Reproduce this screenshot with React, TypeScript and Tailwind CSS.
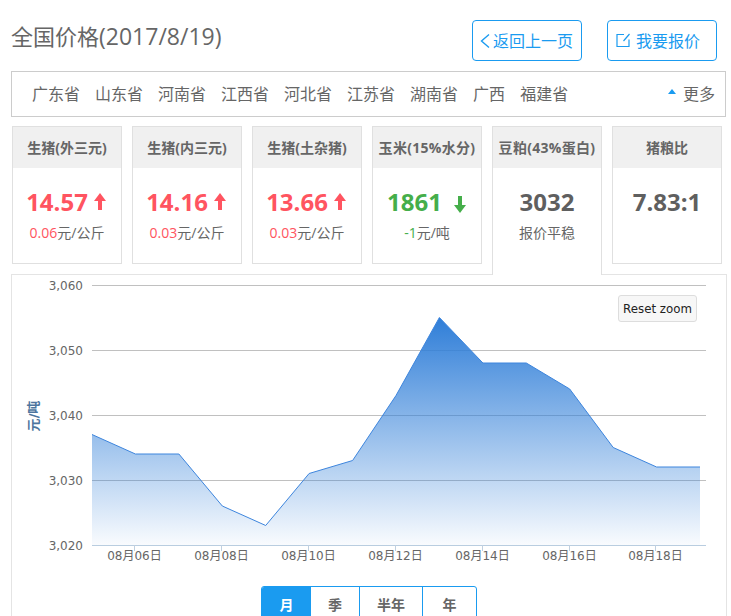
import React from "react";

const data = [3037, 3034, 3034, 3026, 3023, 3031, 3033, 3043, 3055, 3048, 3048, 3044, 3035, 3032, 3032];
const px = (i: number) => 81 + i * 43.43;
const py = (v: number) => 271 - (v - 3020) * 6.5;
const line = data.map((v, i) => `${px(i).toFixed(1)},${py(v).toFixed(1)}`).join(" ");
const area = `${px(0)},271 ${line} ${px(14)},271`;

const provinces = [
  ["广东省", 20],
  ["山东省", 15],
  ["河南省", 15],
  ["江西省", 15],
  ["河北省", 15],
  ["江苏省", 15],
  ["湖南省", 15],
  ["广西", 15],
  ["福建省", 15],
] as const;

function Arrow({ up, color }: { up: boolean; color: string }) {
  return (
    <svg width="14" height="18" viewBox="0 0 14 18" className="shrink-0">
      {up ? (
        <path d="M7 0 L13 8 L9 8 L9 17 L5 17 L5 8 L1 8 Z" fill={color} />
      ) : (
        <path d="M7 18 L13 10 L9 10 L9 1 L5 1 L5 10 L1 10 Z" fill={color} />
      )}
    </svg>
  );
}

function Card({
  title,
  value,
  sub,
  unit,
  tone,
  active,
  wide,
}: {
  title: string;
  value: string;
  sub?: string;
  unit?: string;
  tone: "up" | "down" | "flat";
  active?: boolean;
  wide?: boolean;
}) {
  const valueClass = tone === "up" ? "text-[#ff5460]" : tone === "down" ? "text-[#45ae4a]" : "text-[#5f5f5f]";
  return (
    <div
      className={
        active
          ? "relative z-10 -mb-px flex h-[149px] w-[110px] flex-col border border-b-0 border-[#e0e0e0] bg-white"
          : "flex h-[138px] w-[110px] flex-col border border-[#e0e0e0] bg-white"
      }
    >
      <div
        className={
          wide
            ? "flex h-[41px] items-center justify-center whitespace-nowrap bg-[#f0f0f0] text-[14px] font-bold tracking-[0.3px] text-[#666]"
            : "flex h-[41px] items-center justify-center whitespace-nowrap bg-[#f0f0f0] text-[14px] font-bold text-[#666]"
        }
      >
        {title}
      </div>
      <div
        className={
          tone === "up"
            ? "mt-[19px] flex h-[30px] items-center justify-center gap-[5px] pr-[1px]"
            : "mt-[19px] flex h-[30px] items-center justify-center gap-[5px]"
        }
      >
        <span className={`text-[24px] font-bold leading-[30px] ${valueClass}`}>{value}</span>
        {tone === "up" && <Arrow up color="#ff5460" />}
        {tone === "down" && (
          <span className="ml-[6px] mt-[3px] flex">
            <Arrow up={false} color="#45ae4a" />
          </span>
        )}
      </div>
      <div className="mt-[6px] text-center text-[14px] leading-[20px] text-[#666]">
        {sub && <span className={tone === "up" ? "text-[#ff5460]" : tone === "down" ? "text-[#45ae4a]" : ""}>{sub}</span>}
        {unit}
      </div>
    </div>
  );
}

const yTicks = [
  [3060, 11],
  [3050, 76],
  [3040, 141],
  [3030, 206],
  [3020, 271],
] as const;
const xTicks = [
  ["08月06日", 123],
  ["08月08日", 210],
  ["08月10日", 297],
  ["08月12日", 384],
  ["08月14日", 471],
  ["08月16日", 558],
  ["08月18日", 644],
] as const;

export default function App() {
  return (
    <div
      className="h-[616px] w-[731px] overflow-hidden bg-white pl-[11px] text-[#666]"
      style={{ fontFamily: '"Open Sans", "Noto Sans CJK SC", sans-serif' }}
    >
      <div className="flex h-[71px] items-start">
        <h1 className="mt-[19px] text-[22px] font-normal leading-[34px] text-[#666]">
          全国价格<span className="text-[23px]">(2017/8/19)</span>
        </h1>
        <div className="ml-auto mr-[14px] mt-[20px] flex gap-[25px]">
          <button className="flex h-[41px] w-[110px] items-center justify-center rounded border border-[#1a9bf0] pr-[2px] text-[16px] text-[#1a9bf0]">
            <svg width="12" height="16" viewBox="0 0 12 16" className="mr-[2px]">
              <path d="M10 1.5 L2.5 8 L10 14.5" fill="none" stroke="#1a9bf0" strokeWidth="1.4" />
            </svg>
            返回上一页
          </button>
          <button className="flex h-[41px] w-[110px] items-center justify-center rounded border border-[#1a9bf0] pr-[8px] text-[16px] text-[#1a9bf0]">
            <svg width="15" height="15" viewBox="0 0 15 15" className="mr-[5px]">
              <path d="M8 1.5 H1 V13.5 H13 V6.5" fill="none" stroke="#1a9bf0" strokeWidth="1.2" />
              <path d="M13.5 1 L7.5 8" fill="none" stroke="#1a9bf0" strokeWidth="1.2" />
            </svg>
            我要报价
          </button>
        </div>
      </div>

      <div className="flex h-[46px] w-[715px] items-center border border-[#ccc] text-[16px] text-[#666]">
        {provinces.map(([name, ml]) => (
          <span key={name} style={{ marginLeft: ml }} className="whitespace-nowrap">
            {name}
          </span>
        ))}
        <span className="ml-auto mr-[10px] flex items-center gap-[7px]">
          <svg width="8" height="5" viewBox="0 0 8 5" className="mb-[5px]">
            <path d="M4 0 L8 5 H0 Z" fill="#1a9bf0" />
          </svg>
          更多
        </span>
      </div>

      <div className="ml-px mt-[9px] flex items-start gap-[10px]">
        <Card title="生猪(外三元)" value="14.57" sub="0.06" unit="元/公斤" tone="up" />
        <Card title="生猪(内三元)" value="14.16" sub="0.03" unit="元/公斤" tone="up" />
        <Card title="生猪(土杂猪)" value="13.66" sub="0.03" unit="元/公斤" tone="up" />
        <Card title="玉米(15%水分)" value="1861" sub="-1" unit="元/吨" tone="down" wide />
        <Card title="豆粕(43%蛋白)" value="3032" unit="报价平稳" tone="flat" active wide />
        <Card title="猪粮比" value="7.83:1" tone="flat" />
      </div>

      <div className="relative h-[400px] w-[716px] border border-[#e4e4e4]">
        <svg width="714" height="330" viewBox="1 1 714 330" className="block">
          <defs>
            <linearGradient id="fill" x1="0" y1="0" x2="0" y2="1">
              <stop offset="0" stopColor="#2f7ed8" />
              <stop offset="1" stopColor="#2f7ed8" stopOpacity="0.03" />
            </linearGradient>
          </defs>
          {yTicks.map(([v, y]) => (
            <g key={v}>
              <line x1="81" x2="695" y1={y + 0.5} y2={y + 0.5} stroke={v === 3020 ? "#b9cde0" : "#c0c0c0"} />
              <text x="72" y={y + 5} textAnchor="end" fontSize="12" fill="#666" fontFamily='"DejaVu Sans", sans-serif'>
                {`3,0${String(v).slice(2)}`}
              </text>
            </g>
          ))}
          <polygon points={area} fill="url(#fill)" />
          <polyline points={line} fill="none" stroke="#3d85dd" strokeWidth="1" />
          {xTicks.map(([t, x]) => (
            <g key={t}>
              <line x1={x + 0.5} x2={x + 0.5} y1="271" y2="277" stroke="#c0d0e0" />
              <text
                x={x + 0.5}
                y="286"
                textAnchor="middle"
                fontSize="12"
                fill="#666"
                fontFamily='"DejaVu Sans", "Noto Sans CJK SC", sans-serif'
              >
                {t}
              </text>
            </g>
          ))}
          <text
            x="0"
            y="0"
            transform="translate(27,142) rotate(-90)"
            textAnchor="middle"
            fontSize="13"
            fontWeight="bold"
            fill="#4d759e"
            fontFamily='"DejaVu Sans", "Noto Sans CJK SC", sans-serif'
          >
            元/吨
          </text>
        </svg>
        <button
          className="absolute left-[606px] top-[20px] flex h-[27px] w-[79px] items-center justify-center rounded-[3px] border border-[#ddd] bg-[#f7f7f7] pt-[2px] text-[11.8px] text-[#222]"
          style={{ fontFamily: '"DejaVu Sans", sans-serif' }}
        >
          Reset zoom
        </button>
        <div className="absolute left-[249px] top-[311px] flex h-[36px] w-[216px] overflow-hidden rounded-[3px] border border-[#1a9bf0] text-[14px] font-bold text-[#666]">
          <div className="flex w-[49px] items-center justify-center bg-[#1a9bf0] text-white">月</div>
          <div className="flex w-[48px] items-center justify-center">季</div>
          <div className="flex w-[63px] items-center justify-center border-l border-[#1a9bf0]">半年</div>
          <div className="flex flex-1 items-center justify-center border-l border-[#1a9bf0]">年</div>
        </div>
      </div>
    </div>
  );
}
